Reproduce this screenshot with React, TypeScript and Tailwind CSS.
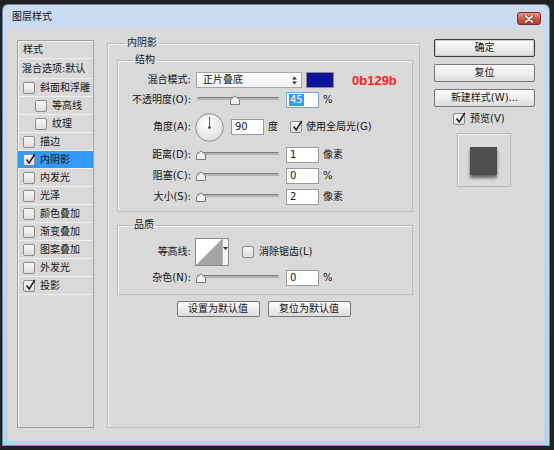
import clsx from "clsx";

// one row of the effect list on the left
interface Effect {
  name: string;
  checked?: boolean;
  selected?: boolean;
  indent?: boolean;
}

const effects: Effect[] = [
  { name: "斜面和浮雕" },
  { name: "等高线", indent: true },
  { name: "纹理", indent: true },
  { name: "描边" },
  { name: "内阴影", checked: true, selected: true },
  { name: "内发光" },
  { name: "光泽" },
  { name: "颜色叠加" },
  { name: "渐变叠加" },
  { name: "图案叠加" },
  { name: "外发光" },
  { name: "投影", checked: true },
];

const CheckBox = ({ checked, className }: { checked?: boolean; className?: string }) => (
  <span
    className={clsx(
      "relative inline-block h-[12px] w-[12px] shrink-0 rounded-[2px] border border-[#8c8c8c] bg-linear-to-b from-[#f7f7f7] to-[#dedede]",
      className
    )}
  >
    {checked && (
      <svg className="absolute left-[1px] top-[-2px]" width="11" height="12" viewBox="0 0 11 12">
        <path d="M1.5 6.5 L4.2 10 L9.8 1" stroke="#1f1f1f" strokeWidth="1.5" fill="none" />
      </svg>
    )}
  </span>
);

const Slider = ({ pos }: { pos: number }) => (
  <div className="relative ml-[6px] h-[16px] w-[82px] shrink-0">
    <div className="absolute left-0 right-0 top-[5px] h-[3px] rounded-full border-t border-[#7f7f7f] bg-[#b4b4b4]" />
    <svg className="absolute top-[3px]" style={{ left: pos - 5 }} width="10" height="10" viewBox="0 0 10 10">
      <path d="M0.5 9.5 V4.8 L5 0.8 L9.5 4.8 V9.5 Z" fill="#f1f1f1" stroke="#7a7a7a" />
    </svg>
  </div>
);

const Field = ({ value, focused }: { value: string; focused?: boolean }) => (
  <div
    className={clsx(
      "ml-[7px] flex h-[16px] w-[33px] shrink-0 items-center border bg-white pl-[2px]",
      focused ? "border-[#7da2ce]" : "border-[#9c9c9c]"
    )}
  >
    {focused ? (
      <span className="bg-[#3399ff] px-[1px] py-[1px] text-white">{value}</span>
    ) : (
      <span className="pl-[1px]">{value}</span>
    )}
  </div>
);

const Label = ({ children }: { children: string }) => (
  <span className="w-[73px] shrink-0 text-right">{children}</span>
);

const SliderRow = ({ label, pos, value, unit, focused, className }: {
  label: string;
  pos: number;
  value: string;
  unit: string;
  focused?: boolean;
  className?: string;
}) => (
  <div className={clsx("flex h-[16px] items-center", className)}>
    <Label>{label}</Label>
    <Slider pos={pos} />
    <Field value={value} focused={focused} />
    <span className="ml-[4px]">{unit}</span>
  </div>
);

const DialogButton = ({ children, primary, className }: { children: string; primary?: boolean; className?: string }) => (
  <button
    className={clsx(
      "flex items-center justify-center rounded-[2px] border bg-linear-to-b from-[#fbfbfb] via-[#eeeeee] to-[#dcdcdc] leading-none text-[#111]",
      primary ? "border-[#3c3c3c] shadow-[inset_0_0_0_1px_#cfcfcf]" : "border-[#777]",
      className
    )}
  >
    {children}
  </button>
);

export default function App() {
  return (
    <div className="h-[450px] w-[554px] overflow-hidden bg-[#222222] pl-[2px] pt-[4px] font-['DejaVu_Sans','Noto_Sans_CJK_SC',sans-serif] text-[10px] leading-none text-[#151515]">
      <div className="flex h-[442px] w-[548px] flex-col rounded-t-[6px] border border-[#6c89a8] border-b-[#35b2de] bg-linear-to-b from-[#c9dcf1] to-[#bcd2ea] px-[5px] pb-[4px]">
        {/* title bar */}
        <div className="flex h-[23px] shrink-0 items-start">
          <span className="ml-[4px] mt-[7px] text-[#111]">图层样式</span>
          <div className="ml-auto mr-[3px] mt-[7px] flex h-[13px] w-[24px] items-center justify-center rounded-[3px] border border-[#7b2c22] bg-linear-to-b from-[#e49a8d] via-[#cf5b48] to-[#c0392b]">
            <svg width="10" height="8" viewBox="0 0 10 8">
              <path d="M1.5 1 L8.5 7 M8.5 1 L1.5 7" stroke="#5a1e18" strokeWidth="3.2" strokeLinecap="round" />
              <path d="M1.5 1 L8.5 7 M8.5 1 L1.5 7" stroke="#ffffff" strokeWidth="1.8" strokeLinecap="round" />
            </svg>
          </div>
        </div>

        {/* dialog body */}
        <div className="flex flex-1 items-start bg-[#d9d9d9] pl-[9px]">
          {/* effect list */}
          <div className="mt-[12px] h-[388px] w-[77px] shrink-0 border border-[#a2a2a2] shadow-[inset_1px_1px_0_#efefef]">
            <div className="flex h-[18px] items-center border-b border-[#efefef] pl-[5px]">样式</div>
            <div className="flex h-[20px] items-center border-b border-[#efefef] pl-[4px]">混合选项:默认</div>
            {effects.map((effect) => (
              <div
                key={effect.name}
                className={clsx(
                  "flex h-[18px] items-center border-b border-[#efefef]",
                  effect.indent ? "pl-[17px]" : "pl-[5px]",
                  effect.selected && "bg-[#3399ff]"
                )}
              >
                <CheckBox checked={effect.checked} />
                <span className="ml-[5px]">{effect.name}</span>
              </div>
            ))}
          </div>

          {/* inner shadow settings */}
          <fieldset className="ml-[13px] mt-[7px] h-[393px] w-[313px] shrink-0 border border-[#bdbdbd] shadow-[inset_1px_1px_0_#efefef]">
            <legend className="ml-[17px] px-[2px] leading-[16px]">内阴影</legend>

            <fieldset className="ml-[9px] mt-[1px] h-[160px] w-[296px] border border-[#bdbdbd] shadow-[inset_1px_1px_0_#efefef]">
              <legend className="ml-[15px] px-[2px] leading-[16px]">结构</legend>

              <div className="mt-[4px] flex h-[16px] items-center">
                <Label>混合模式:</Label>
                <div className="ml-[5px] flex h-[16px] w-[106px] shrink-0 items-center justify-between border border-[#a5a5a5] bg-linear-to-b from-[#ffffff] to-[#f0f0f0] pl-[6px] pr-[4px]">
                  <span>正片叠底</span>
                  <svg width="5" height="9" viewBox="0 0 5 9">
                    <path d="M0 3.5 L2.5 0.5 L5 3.5 Z M0 5.5 L2.5 8.5 L5 5.5 Z" fill="#333" />
                  </svg>
                </div>
                <div className="ml-[4px] h-[16px] w-[28px] shrink-0 border border-[#8a8a8a] bg-[#0b129b]" />
                <span className="ml-[18px] font-['Liberation_Sans',sans-serif] text-[13px] font-bold text-[#ff2020]">
                  0b129b
                </span>
              </div>

              <SliderRow className="mt-[4px]" label="不透明度(O):" pos={38} value="45" unit="%" focused />

              <div className="mt-[4px] flex h-[30px] items-center">
                <Label>角度(A):</Label>
                <svg className="ml-[4px] shrink-0" width="29" height="29" viewBox="0 0 29 29">
                  <defs>
                    <radialGradient id="dial" cx="40%" cy="35%" r="70%">
                      <stop offset="0" stopColor="#ffffff" />
                      <stop offset="1" stopColor="#dcdcdc" />
                    </radialGradient>
                  </defs>
                  <circle cx="14.5" cy="14.5" r="13.8" fill="url(#dial)" stroke="#8e8e8e" />
                  <line x1="14.5" y1="14.5" x2="14.5" y2="4" stroke="#5a5a5a" strokeWidth="1" />
                  <circle cx="14.5" cy="14.5" r="1.3" fill="#333" />
                </svg>
                <Field value="90" />
                <span className="ml-[4px]">度</span>
                <CheckBox checked className="ml-[12px]" />
                <span className="ml-[4px]">使用全局光(G)</span>
              </div>

              <SliderRow className="mt-[5px]" label="距离(D):" pos={4} value="1" unit="像素" />
              <SliderRow className="mt-[5px]" label="阻塞(C):" pos={4} value="0" unit="%" />
              <SliderRow className="mt-[5px]" label="大小(S):" pos={4} value="2" unit="像素" />
            </fieldset>

            <fieldset className="ml-[9px] mt-[5px] h-[78px] w-[296px] border border-[#bdbdbd] shadow-[inset_1px_1px_0_#efefef]">
              <legend className="ml-[14px] px-[2px] leading-[16px]">品质</legend>

              <div className="mt-[5px] flex h-[28px] items-center">
                <Label>等高线:</Label>
                <div className="ml-[4px] flex h-[28px] w-[34px] shrink-0 border border-[#8c8c8c] bg-white">
                  <svg width="26" height="26" viewBox="0 0 26 26">
                    <polygon points="0,26 26,0 26,26" fill="#a4a4a4" />
                  </svg>
                  <div className="flex flex-1 justify-center border-l border-[#b4b4b4] bg-[#f4f4f4] pt-[8px]">
                    <svg width="5" height="3" viewBox="0 0 5 3">
                      <path d="M0 0 L5 0 L2.5 3 Z" fill="#333" />
                    </svg>
                  </div>
                </div>
                <CheckBox className="ml-[13px]" />
                <span className="ml-[5px]">消除锯齿(L)</span>
              </div>

              <SliderRow className="mt-[4px]" label="杂色(N):" pos={4} value="0" unit="%" />
            </fieldset>

            <div className="mt-[6px] flex justify-center gap-[8px]">
              <DialogButton className="h-[16px] w-[83px]">设置为默认值</DialogButton>
              <DialogButton className="h-[16px] w-[83px]">复位为默认值</DialogButton>
            </div>
          </fieldset>

          {/* buttons and preview */}
          <div className="ml-[14px] mt-[11px] flex w-[101px] shrink-0 flex-col">
            <DialogButton primary className="h-[18px] w-[101px]">确定</DialogButton>
            <DialogButton className="mt-[7px] h-[18px] w-[101px]">复位</DialogButton>
            <DialogButton className="mt-[7px] h-[18px] w-[101px]">新建样式(W)...</DialogButton>
            <div className="ml-[19px] mt-[5px] flex h-[14px] items-center">
              <CheckBox checked />
              <span className="ml-[5px]">预览(V)</span>
            </div>
            <div className="ml-[23px] mt-[7px] h-[54px] w-[54px] border border-[#b8b8b8] shadow-[inset_1px_1px_0_#efefef]">
              <div className="ml-[12px] mt-[13px] h-[28px] w-[27px] bg-[#4e4e4e] shadow-[0_3px_3px_rgba(0,0,0,0.55)]" />
            </div>
          </div>
        </div>
      </div>
    </div>
  );
}
